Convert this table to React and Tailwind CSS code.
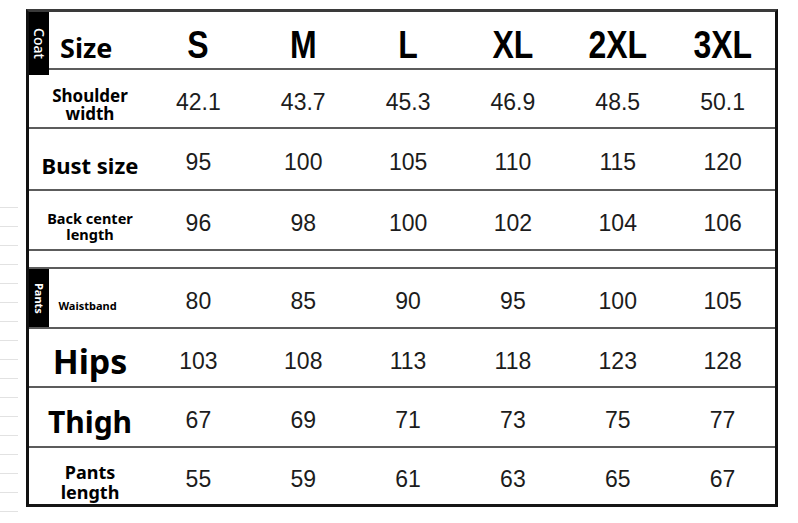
const sizes = ["S", "M", "L", "XL", "2XL", "3XL"];

const rows = [
    {label: ["Shoulder", "width"], cls: "text-[17px] leading-[18px] pt-[12px]", values: ["42.1", "43.7", "45.3", "46.9", "48.5", "50.1"], h: "h-[59px]"},
    {label: ["Bust size"], cls: "text-[22px] leading-[24px] pt-[12px]", values: ["95", "100", "105", "110", "115", "120"], h: "h-[62px]"},
    {label: ["Back center", "length"], cls: "text-[14.5px] leading-[16px] pt-[12px]", values: ["96", "98", "100", "102", "104", "106"], h: "h-[60px]"},
];

const pantsRows = [
    {label: ["Hips"], cls: "text-[34px] leading-[36px] pt-[6px]", values: ["103", "108", "113", "118", "123", "128"], h: "h-[59px]"},
    {label: ["Thigh"], cls: "text-[30px] leading-[32px] pt-[10px]", values: ["67", "69", "71", "73", "75", "77"], h: "h-[60px]"},
    {label: ["Pants", "length"], cls: "text-[18px] leading-[20px] pt-[12px]", values: ["55", "59", "61", "63", "65", "67"], h: "h-[56px]"},
];

const labelFont = "font-['Noto_Sans','Liberation_Sans',sans-serif] font-bold text-black";
const valueFont = "font-['Liberation_Sans',Arial,sans-serif] text-[23px] text-[#1c1c1c]";

const Values = ({values}) =>
    values.map((v) => (
        <div key={v} className={`flex items-center justify-center pt-[7px] ${valueFont}`}>
            {v}
        </div>
    ));

const Row = ({row, last}) => (
    <div
        className={`grid shrink-0 grid-cols-[117px_repeat(6,1fr)] ${row.h} ${
            last ? "" : "border-b-2 border-[#5c5c5c]"
        }`}
    >
        <div className={`flex flex-col items-center justify-center pl-[5px] ${labelFont} ${row.cls}`}>
            {row.label.map((l) => (
                <span key={l}>{l}</span>
            ))}
        </div>
        <Values values={row.values} />
    </div>
);

const SideTag = ({text, cls}) => (
    <div className="flex w-[20px] shrink-0 items-center justify-center bg-black">
        <span className={`text-white [writing-mode:vertical-rl] ${cls}`}>{text}</span>
    </div>
);

const App = () => {
    return (
        <div className="flex h-[523px] w-[798px] overflow-hidden bg-white">
            <div className="flex w-[26px] shrink-0 flex-col gap-[18px] pt-[207px]">
                {Array.from({length: 17}).map((_, i) => (
                    <div key={i} className="h-px w-[18px] bg-[#e2e2e2]" />
                ))}
            </div>

            <div className="mt-[9px] flex h-[498px] w-[752px] flex-col border-x-[3px] border-t-[3px] border-b-[3px] border-x-[#111] border-t-[#3a3a3a] border-b-[#151515]">
                <div className="grid h-[58px] shrink-0 grid-cols-[117px_repeat(6,1fr)] border-b-2 border-[#5c5c5c]">
                    <div className="flex">
                        <SideTag text="Coat" cls="font-['Noto_Sans',sans-serif] text-[14px] font-medium" />
                        <div className={`flex flex-1 items-center pl-[11px] pt-[10px] text-[27px] ${labelFont}`}>
                            Size
                        </div>
                    </div>
                    {sizes.map((s) => (
                        <div
                            key={s}
                            className="flex items-center justify-center pt-[4px] font-['Liberation_Sans',Arial,sans-serif] text-[39px] font-bold text-black"
                        >
                            <span className="inline-block scale-x-[0.82]">{s}</span>
                        </div>
                    ))}
                </div>

                {rows.map((r) => (
                    <Row key={r.label[0]} row={r} />
                ))}

                <div className="h-[18px] shrink-0 border-b-2 border-[#5c5c5c]" />

                <div className="grid h-[60px] shrink-0 grid-cols-[117px_repeat(6,1fr)] border-b-2 border-[#5c5c5c]">
                    <div className="flex">
                        <SideTag text="Pants" cls="font-['Noto_Sans',sans-serif] text-[11px] font-bold" />
                        <div className={`flex flex-1 items-center justify-center pr-[20px] pt-[16px] text-[11px] ${labelFont}`}>
                            Waistband
                        </div>
                    </div>
                    <Values values={["80", "85", "90", "95", "100", "105"]} />
                </div>

                {pantsRows.map((r, i) => (
                    <Row key={r.label[0]} row={r} last={i === pantsRows.length - 1} />
                ))}
            </div>
        </div>
    );
};

export default App;
